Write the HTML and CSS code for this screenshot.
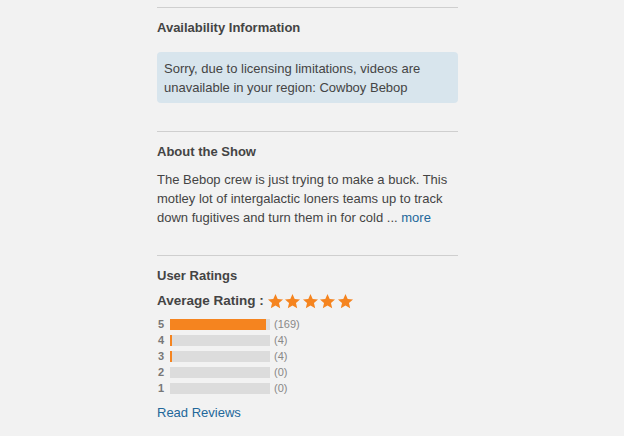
FILE: index.html
```html
<!DOCTYPE html>
<html lang="en">
<head>
  <meta charset="UTF-8">
  <title>Cowboy Bebop</title>
  <link rel="stylesheet" href="styles.css">
</head>
<body>
<div class="sidebar">

  <div class="section">
    <h3>Availability Information</h3>
    <div class="notice">Sorry, due to licensing limitations, videos are unavailable in your region: Cowboy Bebop</div>
  </div>

  <div class="section">
    <h3>About the Show</h3>
    <p class="about">The Bebop crew is just trying to make a buck. This motley lot of intergalactic loners teams up to track down fugitives and turn them in for cold ... <a href="#">more</a></p>
  </div>

  <div class="section last">
    <h3>User Ratings</h3>
    <div class="average">
      <span>Average Rating :</span>
      <span class="stars">
        <svg viewBox="0 0 24 24"><polygon points="12,1.5 15.1,8.4 22.6,9.1 16.9,14.1 18.6,21.5 12,17.6 5.4,21.5 7.1,14.1 1.4,9.1 8.9,8.4"/></svg>
        <svg viewBox="0 0 24 24"><polygon points="12,1.5 15.1,8.4 22.6,9.1 16.9,14.1 18.6,21.5 12,17.6 5.4,21.5 7.1,14.1 1.4,9.1 8.9,8.4"/></svg>
        <svg viewBox="0 0 24 24"><polygon points="12,1.5 15.1,8.4 22.6,9.1 16.9,14.1 18.6,21.5 12,17.6 5.4,21.5 7.1,14.1 1.4,9.1 8.9,8.4"/></svg>
        <svg viewBox="0 0 24 24"><polygon points="12,1.5 15.1,8.4 22.6,9.1 16.9,14.1 18.6,21.5 12,17.6 5.4,21.5 7.1,14.1 1.4,9.1 8.9,8.4"/></svg>
        <svg viewBox="0 0 24 24"><polygon points="12,1.5 15.1,8.4 22.6,9.1 16.9,14.1 18.6,21.5 12,17.6 5.4,21.5 7.1,14.1 1.4,9.1 8.9,8.4"/></svg>
      </span>
    </div>

    <div class="ratings">
      <div class="rating-row">
        <span class="num">5</span>
        <span class="bar"><span class="fill" style="width: 95.5%"></span></span>
        <span class="count">(169)</span>
      </div>
      <div class="rating-row">
        <span class="num">4</span>
        <span class="bar"><span class="fill" style="width: 2.3%"></span></span>
        <span class="count">(4)</span>
      </div>
      <div class="rating-row">
        <span class="num">3</span>
        <span class="bar"><span class="fill" style="width: 2.3%"></span></span>
        <span class="count">(4)</span>
      </div>
      <div class="rating-row">
        <span class="num">2</span>
        <span class="bar"><span class="fill" style="width: 0%"></span></span>
        <span class="count">(0)</span>
      </div>
      <div class="rating-row">
        <span class="num">1</span>
        <span class="bar"><span class="fill" style="width: 0%"></span></span>
        <span class="count">(0)</span>
      </div>
    </div>

    <a class="reviews" href="#">Read Reviews</a>
  </div>

</div>
</body>
</html>
```

FILE: styles.css
```css
body {
  margin: 0;
  background-color: #f2f2f2;
  font-family: "Liberation Sans", Arial, sans-serif;
  font-size: 13px;
  line-height: 19px;
  color: #444;
}

a {
  color: #22679a;
  text-decoration: none;
}

.sidebar {
  width: 301px;
  margin-left: 157px;
  padding-top: 7px;
}

.section {
  border-top: 1px solid #cfcfcf;
  padding: 11px 0 28px;
}

.section.last {
  padding-bottom: 20px;
}

h3 {
  margin: 0;
  font-size: 13px;
  line-height: 18px;
  font-weight: bold;
  color: #444;
}

.notice {
  margin-top: 15px;
  padding: 7px 7px 6px;
  background-color: #d8e5ed;
  border-radius: 4px;
}

.about {
  margin: 9px 0 0;
}

.average {
  display: flex;
  align-items: center;
  gap: 3px;
  margin-top: 6px;
  font-size: 13.5px;
  line-height: 20px;
  font-weight: bold;
}

.stars {
  display: flex;
  gap: 0.5px;
}

.stars svg {
  width: 17px;
  height: 17px;
  fill: #f5841f;
}

.ratings {
  margin-top: 5px;
}

.rating-row {
  display: flex;
  align-items: center;
  height: 16px;
  font-size: 11px;
}

.num {
  width: 12px;
  padding-left: 1px;
  font-weight: bold;
  color: #777;
}

.bar {
  width: 100px;
  height: 11px;
  background-color: #dcdcdc;
}

.fill {
  display: block;
  height: 100%;
  background-color: #f5841f;
}

.count {
  margin-left: 4px;
  color: #888;
}

.reviews {
  display: inline-block;
  margin-top: 7px;
}
```
